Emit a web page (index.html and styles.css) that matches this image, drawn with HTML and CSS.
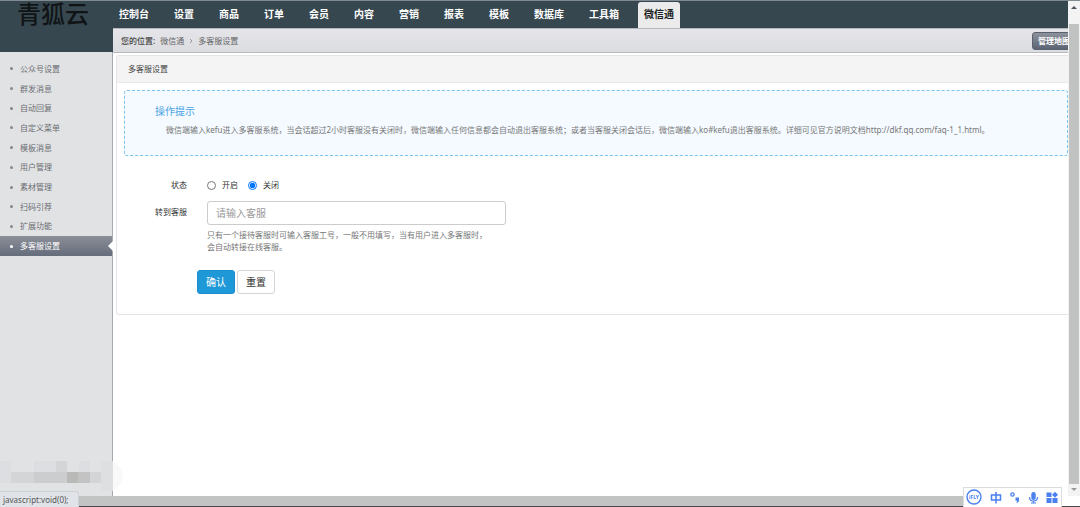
FILE: index.html
```html
<!DOCTYPE html>
<html lang="zh-CN">
<head>
<meta charset="utf-8">
<title>多客服设置</title>
<link rel="stylesheet" href="styles.css">
</head>
<body>
<div class="window">
  <div class="admin">
    <aside class="sidebar">
      <div class="brand">青狐云</div>
      <nav class="menu">
        <a href="#">公众号设置</a>
        <a href="#">群发消息</a>
        <a href="#">自动回复</a>
        <a href="#">自定义菜单</a>
        <a href="#">模板消息</a>
        <a href="#">用户管理</a>
        <a href="#">素材管理</a>
        <a href="#">扫码引荐</a>
        <a href="#">扩展功能</a>
        <a href="#" class="active">多客服设置</a>
      </nav>
      <svg class="mosaic" width="124" height="30" viewBox="0 0 124 30" aria-hidden="true">
        <circle cx="109" cy="15" r="14" fill="#f9f9f9"/>
        <path fill="#e1e2e4" d="M0 0h113v30H0z"/>
        <path fill="#dcdee1" d="M0 0h11v22H0zM34 0h22v11H34zM79 0h11v11H79z"/>
        <path fill="#d3d5d6" d="M56 0h11v11H56zM11 11h23v11H11zM90 11h11v11H90z"/>
        <path fill="#cbcdce" d="M34 11h33v11H34z"/>
        <path fill="#b9b9b8" d="M67 11h11v11H67z"/>
        <path fill="#c2c3c2" d="M78 11h12v11H78z"/>
        <path fill="#dddfe0" d="M101 0h12v30h-12z"/>
      </svg>
    </aside>
    <div class="content">
      <nav class="topnav">
        <a href="#">控制台</a>
        <a href="#">设置</a>
        <a href="#">商品</a>
        <a href="#">订单</a>
        <a href="#">会员</a>
        <a href="#">内容</a>
        <a href="#">营销</a>
        <a href="#">报表</a>
        <a href="#">模板</a>
        <a href="#">数据库</a>
        <a href="#">工具箱</a>
        <a href="#" class="current">微信通</a>
      </nav>
      <div class="crumbs">
        <div class="trail"><b>您的位置:</b><a href="#">微信通</a><svg width="4" height="6" viewBox="0 0 4 6" aria-hidden="true"><path d="M1 1l2 2-2 2" fill="none" stroke="#999"/></svg><span>多客服设置</span></div>
        <button class="map" type="button">管理地图</button>
      </div>
      <main class="panel">
        <h1 class="panel-title">多客服设置</h1>
        <section class="tips">
          <h2>操作提示</h2>
          <p>微信端输入kefu进入多客服系统，当会话超过2小时客服没有关闭时，微信端输入任何信息都会自动退出客服系统；或者当客服关闭会话后，微信端输入ko#kefu退出客服系统。详细可见官方说明文档http://dkf.qq.com/faq-1_1.html。</p>
        </section>
        <form class="form">
          <div class="row state">
            <span class="label" id="state">状态</span>
            <div class="radios" role="radiogroup" aria-labelledby="state">
              <label><input type="radio" name="state">开启</label>
              <label><input type="radio" name="state" checked>关闭</label>
            </div>
          </div>
          <div class="row">
            <label class="label transfer" for="agent">转到客服</label>
            <div class="field">
              <input class="text" id="agent" type="text" placeholder="请输入客服">
              <p class="help">只有一个接待客服时可输入客服工号，一般不用填写，当有用户进入多客服时，会自动转接在线客服。</p>
            </div>
          </div>
          <div class="actions">
            <button class="btn primary" type="submit">确认</button>
            <button class="btn" type="reset">重置</button>
          </div>
        </form>
      </main>
    </div>
  </div>
  <div class="vbar">
    <svg width="12" height="23" viewBox="0 0 12 23" aria-hidden="true"><path d="M3 8l3-3 3 3z" fill="#4b565e"/></svg>
    <div class="thumb"></div>
    <svg width="12" height="12" viewBox="0 0 12 12" aria-hidden="true"><path d="M3 4h6L6 7z" fill="#999"/></svg>
  </div>
  <div class="hbar"></div>
</div>
<div class="status">javascript:void(0);</div>
<div class="ime">
  <svg width="97" height="19" viewBox="0 0 97 19" role="img" aria-label="输入法">
    <g fill="none" stroke="#4a80f0">
      <circle cx="10" cy="9" r="7" stroke-width="1.4"/>
      <path d="M27.500 7h9v5h-9zM32 4v11.500" stroke-width="1.5"/>
      <circle cx="48.500" cy="6.500" r="1.700" stroke-width="1.300"/>
      <path d="M65.500 9c0 5.300 8 5.300 8 0M69.500 13v2.500M67 15h5" stroke-width="1.200"/>
    </g>
    <g fill="#4a80f0">
      <path d="M51.500 9.500h3.500v3c0 1-1 2-2 2.500l-.7-.8c.7-.4 1-.9 1-1.500h-1.800z"/>
      <rect x="67.300" y="4" width="4.400" height="8" rx="2.200"/>
      <path d="M82.500 4.500h5v4.500h-5zM82.500 10h5v5h-5zM88.500 10h5v5h-5zM91 3.800l3 3-3 3-3-3z"/>
    </g>
    <text class="ime-name" x="10" y="11" text-anchor="middle">iFLY</text>
  </svg>
</div>
</body>
</html>
```
FILE: styles.css
```css
* { box-sizing: border-box; }
body {
  margin: 0;
  font: 8px/12px "Noto Sans", "Noto Sans CJK SC", sans-serif;
  color: #666;
  background: #fff;
}
h1, h2, p { margin: 0; font-weight: normal; }
a { color: inherit; text-decoration: none; }
button, input { font-family: inherit; }
svg { display: block; }

.window {
  display: grid;
  grid-template-columns: minmax(0, 1fr) 12px;
  grid-template-rows: minmax(0, 1fr) 10px;
  height: 100vh;
  border-top: 1px solid #7f8a90;
  border-bottom: 1px solid #48484c;
}
.admin {
  display: grid;
  grid-template-columns: 113px minmax(0, 1fr);
  overflow: hidden;
}

.sidebar {
  display: flex;
  flex-direction: column;
  background: #e1e2e4;
  border-right: 1px solid #a5a9b0;
}
.brand {
  height: 51px;
  padding-left: 17px;
  margin-right: -1px;
  background: #37474f;
  color: #101416;
  font-size: 24px;
  font-weight: 500;
  line-height: 26px;
}
.menu {
  display: grid;
  grid-auto-rows: 1fr;
  height: 197px;
  margin-top: 7px;
}
.menu a {
  display: flex;
  align-items: center;
  gap: 7px;
  padding-left: 10px;
  color: #6a6d72;
}
.menu a::before {
  content: "";
  width: 3px;
  height: 3px;
  border-radius: 50%;
  background: #85888e;
}
.menu .active {
  position: relative;
  color: #fff;
  background: linear-gradient(#8b8f98, #656c7a);
}
.menu .active::before { background: #fff; }
.menu .active::after {
  content: "";
  position: absolute;
  right: -1px;
  top: 5px;
  border: 5px solid transparent;
  border-right-color: #fff;
  border-left-width: 0;
}
.mosaic {
  margin-top: auto;
  margin-bottom: 5px;
  position: relative;
  z-index: 1;
}

.content { min-width: 0; }
.topnav {
  display: flex;
  gap: 13px;
  height: 27px;
  padding-top: 1px;
  background: #37474f;
  color: #fff;
  font-size: 10px;
  font-weight: bold;
  line-height: 25px;
}
.topnav a {
  padding: 0 6px;
  white-space: nowrap;
}
.topnav .current {
  color: #1b1f23;
  background: #ebebeb;
  border-radius: 3px 3px 0 0;
}
.crumbs {
  display: flex;
  align-items: center;
  justify-content: space-between;
  height: 25px;
  padding-left: 8px;
  overflow: hidden;
  background: linear-gradient(#e5e5e9, #dcdde0);
  border-top: 1px solid #b5b9be;
  border-bottom: 1px solid #b8babe;
}
.trail {
  display: flex;
  align-items: center;
  gap: 5px;
}
.trail b { font-weight: 500; color: #444; }
.map {
  width: 44px;
  height: 18px;
  margin-right: -8px;
  padding: 0 4px;
  border: 1px solid #5a6270;
  border-radius: 3px;
  background: linear-gradient(#8d929c, #5c6473);
  color: #fff;
  font-size: 8px;
  font-weight: bold;
  white-space: nowrap;
}

.panel {
  margin: 2px 0 0 3px;
  border: 1px solid #e4e4e4;
  border-right: 0;
  border-radius: 3px 0 0 3px;
}
.panel-title {
  padding: 7px 11px;
  border-bottom: 1px solid #e8e8e8;
  background: #f4f4f4;
  color: #444;
  font-size: 8px;
  line-height: 12px;
}
.tips {
  margin: 7px 0 0 7px;
  padding: 13px 30px 19px;
  border: 1px dashed #7cc3ed;
  border-radius: 3px;
  background: #f4faff;
}
.tips h2 {
  color: #4aa3e4;
  font-size: 10px;
  line-height: 14px;
}
.tips p {
  margin-top: 6px;
  padding-left: 11px;
  color: #777;
  white-space: nowrap;
}
.form { padding: 23px 0 20px; }
.row { display: flex; gap: 20px; }
.label {
  width: 70px;
  color: #333;
  text-align: right;
}
.state { margin-bottom: 10px; }
.radios { display: flex; gap: 10px; }
.radios label {
  display: flex;
  align-items: center;
  gap: 6px;
  color: #333;
}
.radios input {
  width: 9px;
  height: 9px;
  margin: 0;
}
.transfer { padding-top: 5px; }
.field { width: 299px; }
.text {
  display: block;
  width: 100%;
  height: 24px;
  padding: 0 8px;
  border: 1px solid #ccc;
  border-radius: 3px;
  font-size: 10px;
}
.text::placeholder { color: #999; }
.help {
  margin-top: 4px;
  padding-right: 14px;
  color: #777;
}
.actions {
  display: flex;
  gap: 2px;
  margin-top: 17px;
  padding-left: 80px;
}
.btn {
  width: 38px;
  height: 24px;
  padding: 0 0 2px;
  border: 1px solid #d5d5d5;
  border-radius: 3px;
  background: #fff;
  color: #333;
  font-size: 10px;
}
.primary {
  border-color: #1b8ecb;
  background: #1e98d7;
  color: #fff;
}

.vbar {
  display: flex;
  flex-direction: column;
  background: #f3f3f3;
}
.thumb {
  flex: 1;
  margin: 0 1px;
  background: #c1c2c2;
}
.hbar {
  grid-column: 1 / -1;
  margin-right: 18px;
  background: #c1c4c2;
}
.status {
  position: absolute;
  left: 0;
  bottom: 0;
  padding: 2px 9px 1px 3px;
  border: 1px solid #cdcfd2;
  border-left: 0;
  border-bottom: 0;
  border-radius: 0 3px 0 0;
  background: #e0e4e9;
  color: #555;
  font-size: 8px;
  line-height: 12px;
}
.ime {
  position: absolute;
  right: 18px;
  bottom: 0;
  border: 1px solid #dcdcdc;
  border-bottom: 0;
  background: #fff;
}
.ime-name {
  fill: #4a80f0;
  font-size: 5px;
  font-weight: bold;
}
```
